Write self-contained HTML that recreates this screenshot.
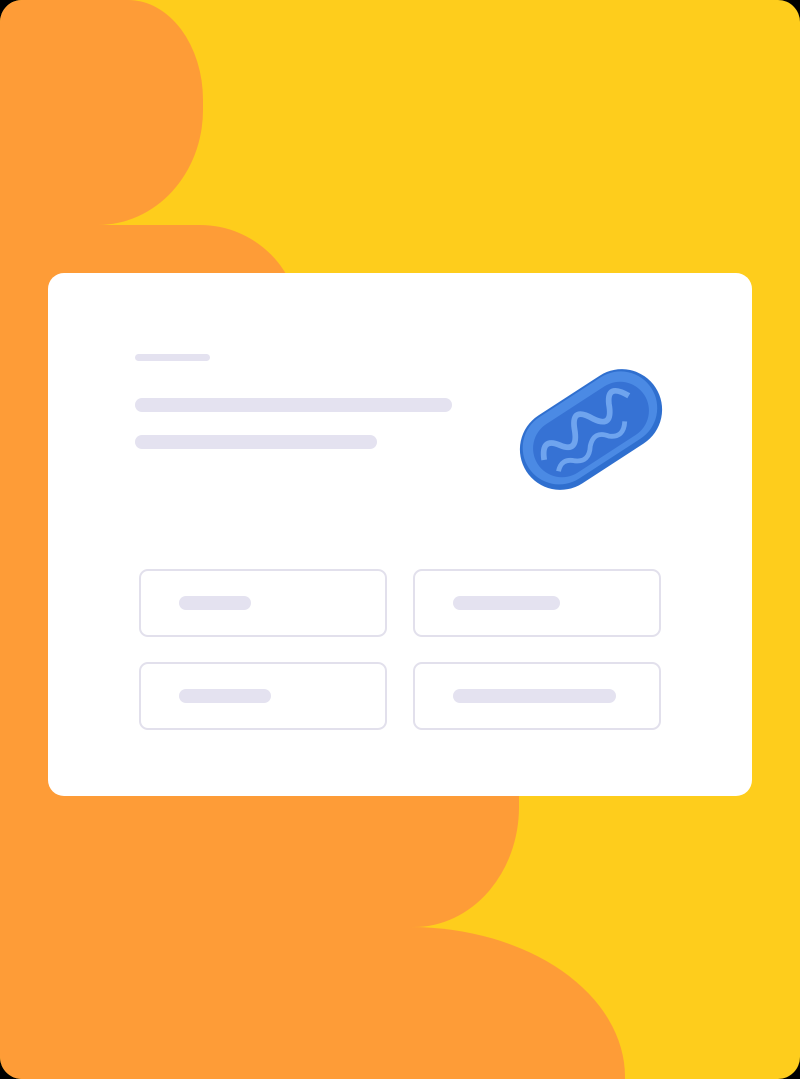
<!DOCTYPE html>
<html><head><style>
html,body{margin:0;padding:0;background:#000;}
.bg{position:relative;width:800px;height:1079px;background:#fecd1c;border-radius:22px;overflow:hidden;}
.o{position:absolute;background:#fe9c37;}
.card{position:absolute;left:48px;top:273px;width:704px;height:523px;background:#fff;border-radius:16px;}
.l{position:absolute;background:#e4e2f0;border-radius:8px;}
.b{position:absolute;width:248px;height:68px;border:2px solid #e2e0ec;border-radius:9px;box-sizing:border-box;}
.b i{position:absolute;top:25px;left:38px;height:14px;background:#e4e2f0;border-radius:7px;}
</style></head><body>
<div class="bg">
<div class="o" style="left:0;top:0;width:203px;height:225px;border-radius:0 75px 105px 0/0 100px 115px 0"></div>
<div class="o" style="left:0;top:225px;width:300px;height:500px;border-radius:0 100px 0 0/0 100px 0 0"></div>
<div class="o" style="left:0;top:600px;width:519px;height:327px;border-radius:0 0 105px 0/0 0 120px 0"></div>
<div class="o" style="left:0;top:927px;width:625px;height:200px;border-radius:0 215px 0 0/0 150px 0 0"></div>
<div class="card">
<div class="l" style="left:87px;top:81px;width:75px;height:7px"></div>
<div class="l" style="left:87px;top:125px;width:317px;height:14px"></div>
<div class="l" style="left:87px;top:162px;width:242px;height:14px"></div>
<svg style="position:absolute;left:466px;top:87px" width="154" height="140" viewBox="0 0 160 145">
<g transform="rotate(-33 80 72)">
<rect x="0" y="30" width="160" height="84" rx="42" fill="#2f6fcf"/>
<rect x="4" y="32" width="152" height="76" rx="38" fill="#4b8ae4"/>
<rect x="14" y="42" width="132" height="60" rx="30" fill="#3672d4"/>
<path d="M22 72 q10 -22 22 -4 q12 18 22 -6 q10 -22 22 2 q12 20 22 -4 q10 -20 22 4" stroke="#6fa4ee" stroke-width="6" fill="none"/>
<path d="M28 90 q10 -10 20 0 q12 10 22 -4 q12 -12 22 2 q12 10 22 -4" stroke="#6fa4ee" stroke-width="5" fill="none"/>
</g>
</svg>
<div class="b" style="left:91px;top:296px"><i style="width:72px"></i></div>
<div class="b" style="left:365px;top:296px"><i style="width:107px"></i></div>
<div class="b" style="left:91px;top:389px"><i style="width:92px"></i></div>
<div class="b" style="left:365px;top:389px"><i style="width:163px"></i></div>
</div>
</div>
</body></html>
